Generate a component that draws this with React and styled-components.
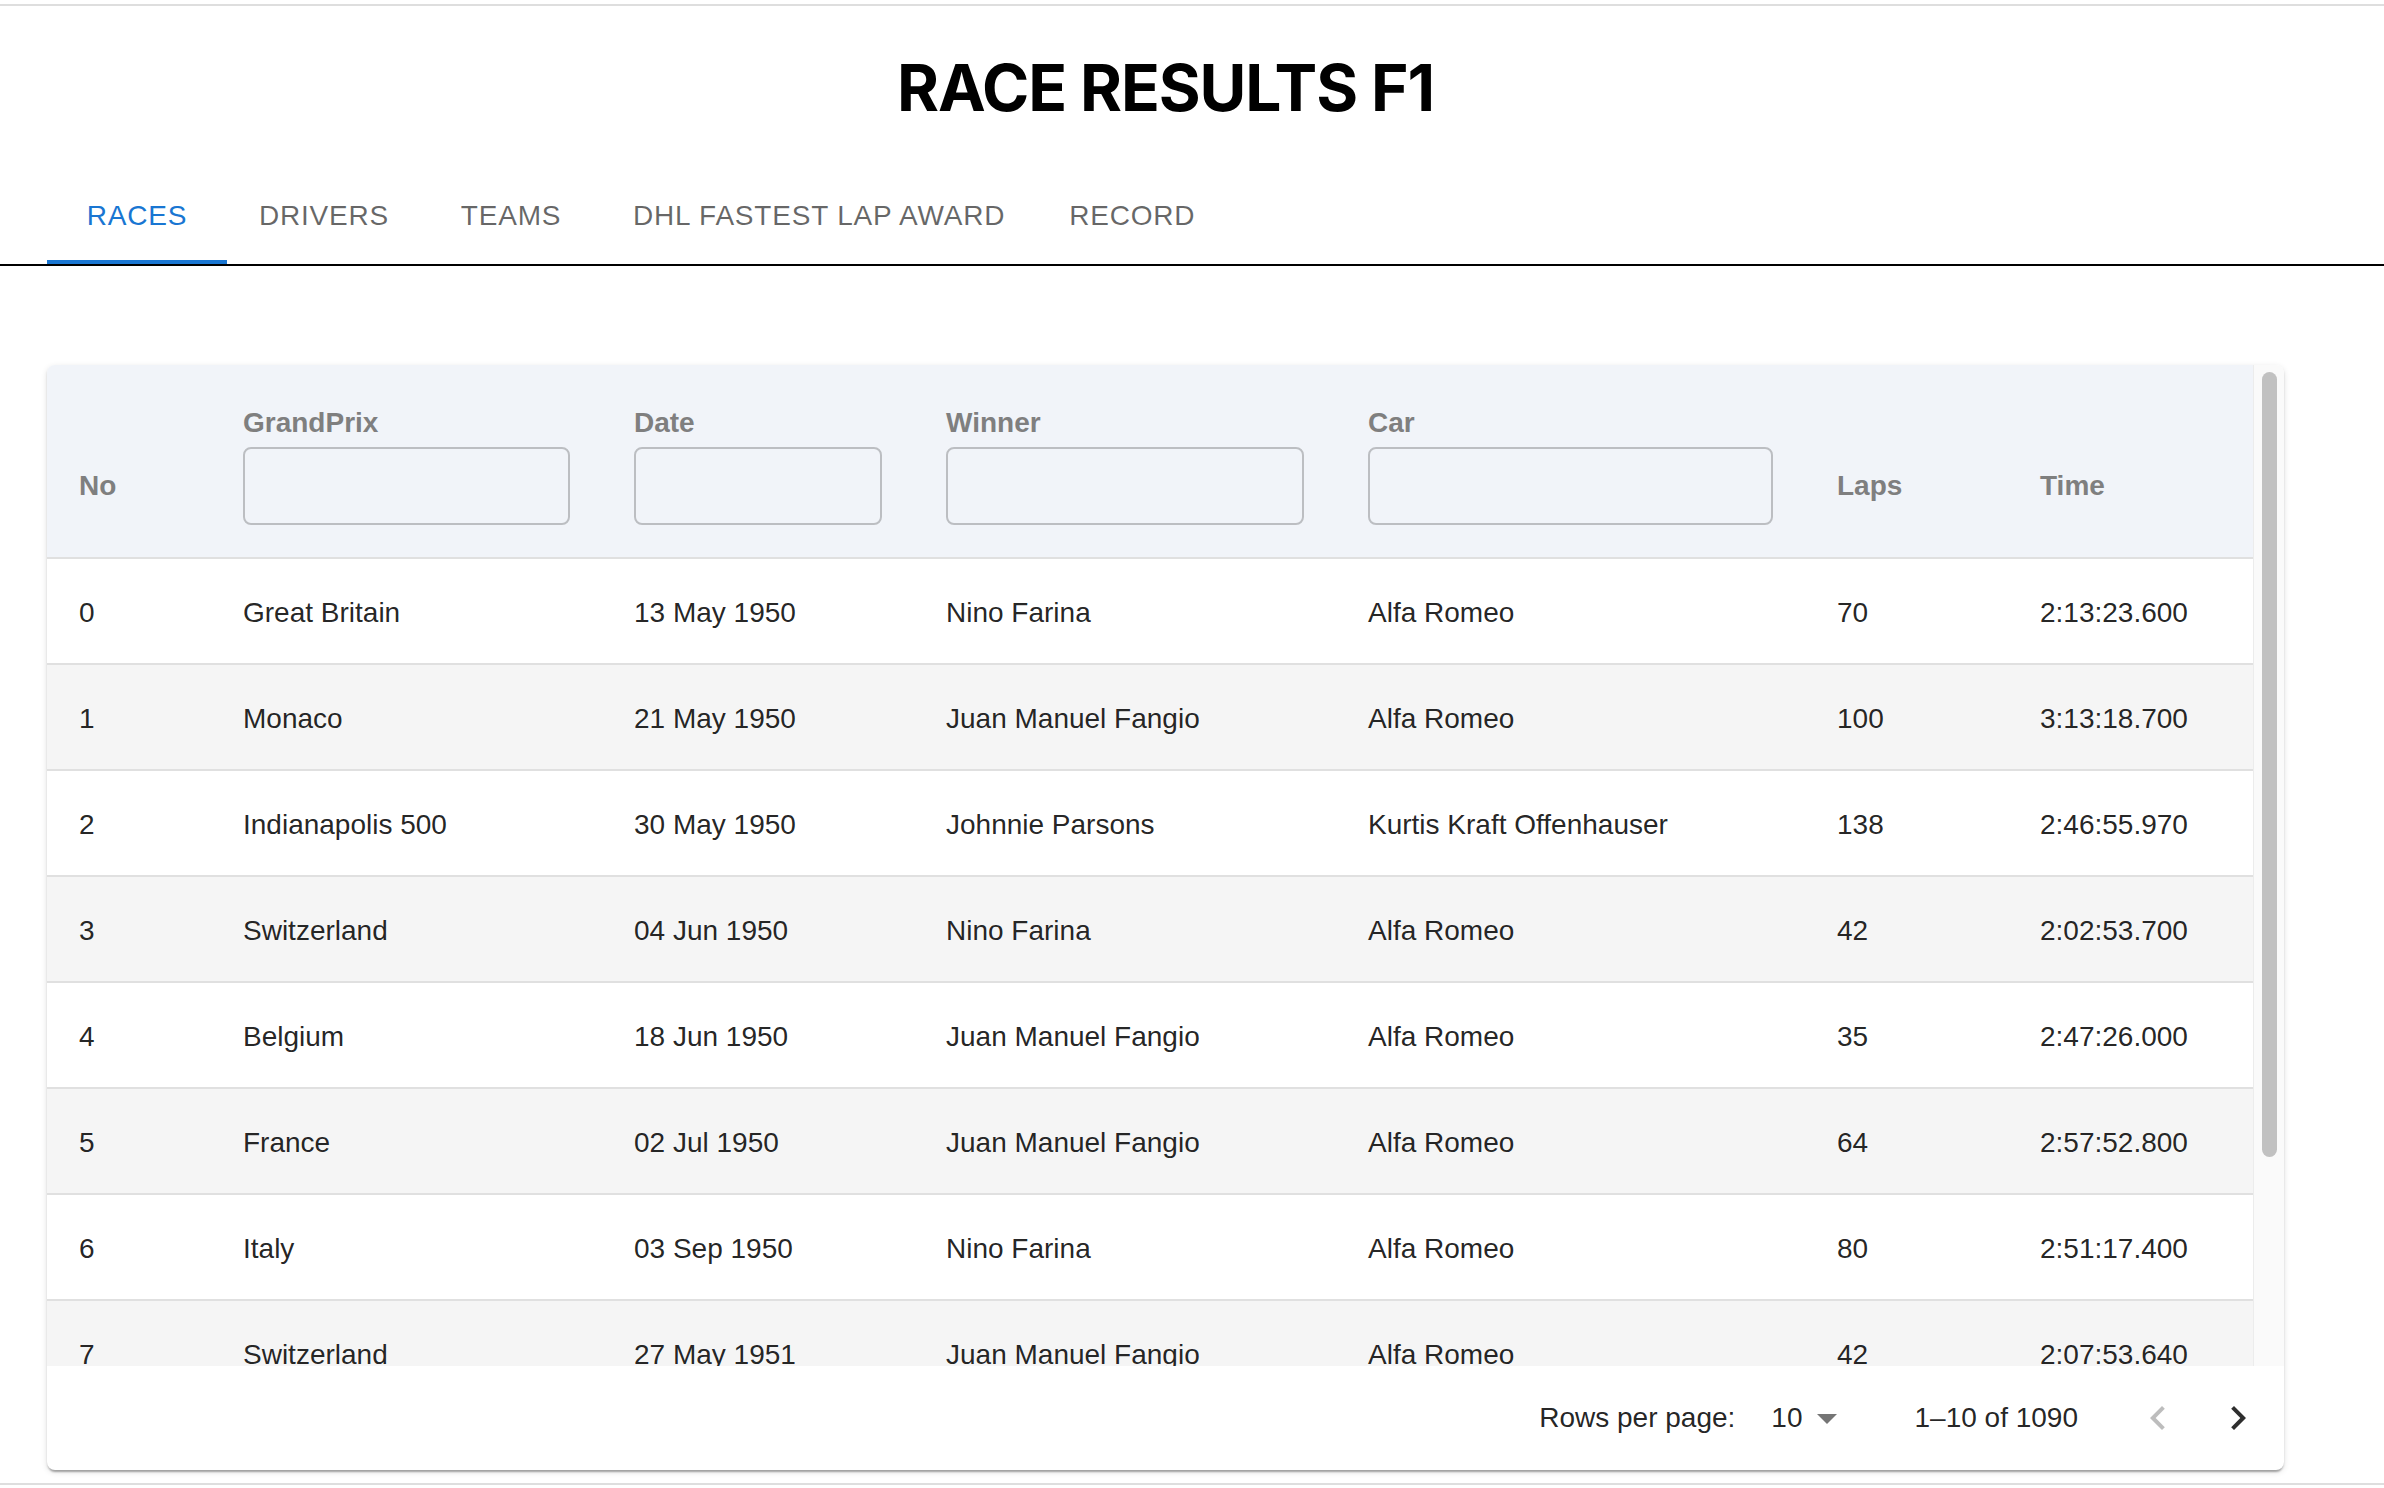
import React from "react";
import styled, { createGlobalStyle } from "styled-components";

const GlobalStyle = createGlobalStyle`
  html, body {
    margin: 0;
    padding: 0;
    background: #fff;
  }
  body {
    font-family: "Liberation Sans", Arial, sans-serif;
  }
  * {
    box-sizing: border-box;
  }
`;

const tabs = ["Races", "Drivers", "Teams", "DHL Fastest Lap Award", "Record"];

const races = [
  { no: 0, grandPrix: "Great Britain", date: "13 May 1950", winner: "Nino Farina", car: "Alfa Romeo", laps: 70, time: "2:13:23.600" },
  { no: 1, grandPrix: "Monaco", date: "21 May 1950", winner: "Juan Manuel Fangio", car: "Alfa Romeo", laps: 100, time: "3:13:18.700" },
  { no: 2, grandPrix: "Indianapolis 500", date: "30 May 1950", winner: "Johnnie Parsons", car: "Kurtis Kraft Offenhauser", laps: 138, time: "2:46:55.970" },
  { no: 3, grandPrix: "Switzerland", date: "04 Jun 1950", winner: "Nino Farina", car: "Alfa Romeo", laps: 42, time: "2:02:53.700" },
  { no: 4, grandPrix: "Belgium", date: "18 Jun 1950", winner: "Juan Manuel Fangio", car: "Alfa Romeo", laps: 35, time: "2:47:26.000" },
  { no: 5, grandPrix: "France", date: "02 Jul 1950", winner: "Juan Manuel Fangio", car: "Alfa Romeo", laps: 64, time: "2:57:52.800" },
  { no: 6, grandPrix: "Italy", date: "03 Sep 1950", winner: "Nino Farina", car: "Alfa Romeo", laps: 80, time: "2:51:17.400" },
  { no: 7, grandPrix: "Switzerland", date: "27 May 1951", winner: "Juan Manuel Fangio", car: "Alfa Romeo", laps: 42, time: "2:07:53.640" },
  { no: 8, grandPrix: "Indianapolis 500", date: "30 May 1951", winner: "Lee Wallard", car: "Kurtis Kraft Offenhauser", laps: 200, time: "3:57:38.050" },
  { no: 9, grandPrix: "Belgium", date: "17 Jun 1951", winner: "Nino Farina", car: "Alfa Romeo", laps: 36, time: "2:45:46.200" },
];

const columns = [
  { key: "no", title: "No" },
  { key: "grandPrix", title: "GrandPrix", filter: true },
  { key: "date", title: "Date", filter: true },
  { key: "winner", title: "Winner", filter: true },
  { key: "car", title: "Car", filter: true },
  { key: "laps", title: "Laps" },
  { key: "time", title: "Time" },
];

const gridCols = "164px 391px 312px 422px 469px 203px 245px";

function App() {
  return (
    <Frame>
      <GlobalStyle />
      <Title>RACE RESULTS F1</Title>
      <TabBar>
        {tabs.map((t, i) => (
          <Tab key={t} active={i === 0}>
            {t}
          </Tab>
        ))}
      </TabBar>
      <Main>
        <Card>
          <TableBody>
            <Viewport>
              <HeadRow>
                {columns.map((c) =>
                  c.filter ? (
                    <HeadCell key={c.key}>
                      <HeadLabel>{c.title}</HeadLabel>
                      <FilterInput />
                    </HeadCell>
                  ) : (
                    <HeadCell key={c.key}>
                      <PlainHead>{c.title}</PlainHead>
                    </HeadCell>
                  )
                )}
              </HeadRow>
              {races.map((r, i) => (
                <Row key={r.no} odd={i % 2 === 1}>
                  {columns.map((c) => (
                    <Cell key={c.key}>{r[c.key]}</Cell>
                  ))}
                </Row>
              ))}
            </Viewport>
            <ScrollTrack>
              <ScrollThumb />
            </ScrollTrack>
          </TableBody>
          <Pagination>
            <span>Rows per page:</span>
            <SelectBox>
              <span>10</span>
              <svg viewBox="0 0 24 24" width="48" height="48">
                <path d="M7 10l5 5 5-5z" fill="rgba(0,0,0,0.54)" />
              </svg>
            </SelectBox>
            <span>1–10 of 1090</span>
            <Actions>
              <PageButton disabled>
                <svg viewBox="0 0 24 24" width="48" height="48">
                  <path
                    d="M15.41 16.59 10.83 12l4.58-4.59L14 6l-6 6 6 6 1.41-1.41z"
                    fill="rgba(0,0,0,0.26)"
                  />
                </svg>
              </PageButton>
              <PageButton>
                <svg viewBox="0 0 24 24" width="48" height="48">
                  <path
                    d="M8.59 16.59 13.17 12 8.59 7.41 10 6l6 6-6 6-1.41-1.41z"
                    fill="rgba(0,0,0,0.82)"
                  />
                </svg>
              </PageButton>
            </Actions>
          </Pagination>
        </Card>
      </Main>
    </Frame>
  );
}

const Frame = styled.div`
  margin-top: 4px;
  height: 1481px;
  border-top: 2px solid #dedede;
  border-bottom: 2px solid #dedede;
  overflow: hidden;
`;

const Title = styled.h1`
  margin: 43px 0 0;
  padding: 0 100px 0 47px;
  text-align: center;
  font-family: Inter, "Liberation Sans", sans-serif;
  font-weight: 700;
  font-size: 64px;
  line-height: 77px;
  letter-spacing: -1.1px;
  color: #000;
`;

const TabBar = styled.div`
  margin-top: 42px;
  display: flex;
  padding-left: 47px;
  border-bottom: 2px solid #000;
`;

const Tab = styled.div`
  height: 96px;
  min-width: 180px;
  padding: 4px 32px 0;
  display: flex;
  align-items: center;
  justify-content: center;
  font-size: 28px;
  text-transform: uppercase;
  letter-spacing: 0.8px;
  color: ${(p) => (p.active ? "#1976d2" : "rgba(0, 0, 0, 0.6)")};
  border-bottom: 4px solid ${(p) => (p.active ? "#1976d2" : "transparent")};
  cursor: pointer;
`;

const Main = styled.div`
  padding: 0 100px 0 47px;
  margin-top: 99px;
`;

const Card = styled.div`
  background: #fff;
  border-radius: 8px;
  overflow: hidden;
  box-shadow: 0 4px 2px -2px rgba(0, 0, 0, 0.2), 0 2px 2px 0 rgba(0, 0, 0, 0.14),
    0 2px 6px 0 rgba(0, 0, 0, 0.12);
`;

const TableBody = styled.div`
  display: flex;
  height: 1001px;
`;

const Viewport = styled.div`
  flex: 1;
  overflow: hidden;
`;

const ScrollTrack = styled.div`
  width: 31px;
  flex-shrink: 0;
  padding: 7px 7px 7px 8px;
  background: #fafafa;
  border-left: 1px solid #ececec;
`;

const ScrollThumb = styled.div`
  height: 785px;
  border-radius: 8px;
  background: #c1c1c1;
`;

const HeadRow = styled.div`
  display: grid;
  grid-template-columns: ${gridCols};
  align-items: end;
  padding: 32px 0;
  background: #f1f4f9;
  border-bottom: 2px solid #e0e0e0;
`;

const HeadCell = styled.div`
  padding: 0 32px;
  display: flex;
  flex-direction: column;
`;

const HeadLabel = styled.div`
  margin: 6px 0 4px;
  font-size: 28px;
  font-weight: 700;
  line-height: 40px;
  color: #7f7f7f;
`;

const PlainHead = styled(HeadLabel)`
  margin: 0;
  height: 78px;
  display: flex;
  align-items: center;
`;

const FilterInput = styled.input`
  width: 100%;
  height: 78px;
  border: 2px solid rgba(0, 0, 0, 0.22);
  border-radius: 8px;
  background: transparent;
  outline: none;
`;

const Row = styled.div`
  display: grid;
  grid-template-columns: ${gridCols};
  background: ${(p) => (p.odd ? "#f5f5f5" : "#fff")};
  border-bottom: 2px solid #e0e0e0;
`;

const Cell = styled.div`
  padding: 34px 32px 30px;
  font-size: 28px;
  line-height: 40px;
  color: rgba(0, 0, 0, 0.87);
  white-space: nowrap;
`;

const Pagination = styled.div`
  height: 104px;
  display: flex;
  justify-content: flex-end;
  align-items: center;
  padding-right: 6px;
  font-size: 28px;
  color: rgba(0, 0, 0, 0.87);
`;

const SelectBox = styled.div`
  display: flex;
  align-items: center;
  margin: 0 64px 0 22px;
  padding-left: 14px;
`;

const Actions = styled.div`
  display: flex;
  margin-left: 40px;
`;

const PageButton = styled.button`
  width: 80px;
  height: 80px;
  padding: 16px;
  border: none;
  background: transparent;
  display: flex;
  align-items: center;
  justify-content: center;
  cursor: pointer;
`;

export default App;
